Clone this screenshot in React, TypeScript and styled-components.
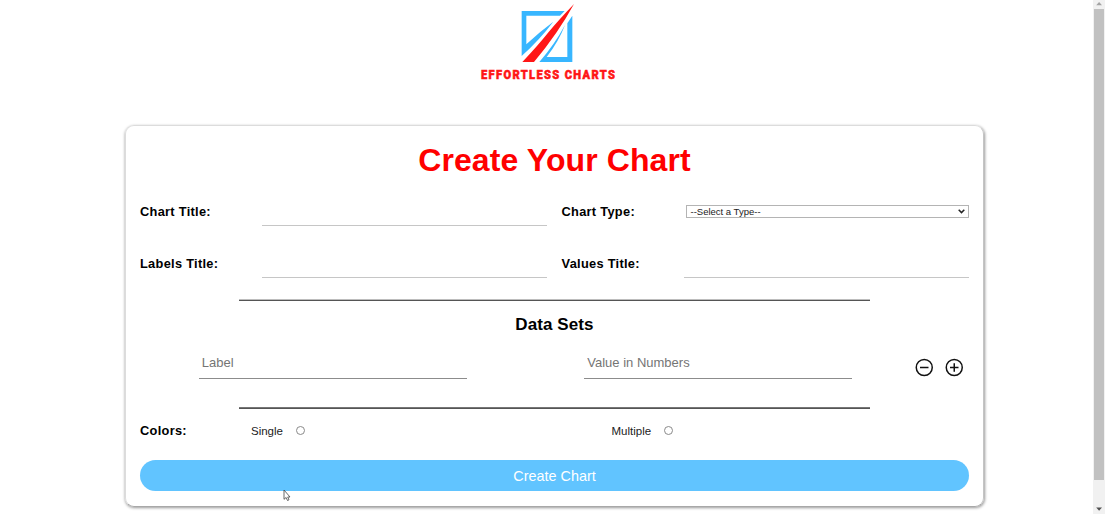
import React from "react";
import styled, { createGlobalStyle } from "styled-components";

const GlobalStyle = createGlobalStyle`
  *, *::before, *::after { box-sizing: border-box; }
  body {
    margin: 0;
    background: #fff;
    color: #000;
    font-family: "Liberation Sans", Arial, sans-serif;
    overflow: hidden;
  }
`;

const Page = styled.div`
  display: flex;
  height: 514px;
  overflow: hidden;
`;

const Main = styled.main`
  flex: 1;
  min-width: 0;
  padding-left: 125px;
`;

const Header = styled.header`
  width: 858px;
  height: 125px;
  display: flex;
  justify-content: center;
  padding-right: 8px;
  svg { overflow: visible; }
`;

const Card = styled.form`
  width: 859px;
  height: 382px;
  padding: 0 14px;
  border: 1px solid #dcdcdc;
  border-right-color: #c4c4c4;
  border-bottom-color: #a8a8a8;
  border-radius: 9px;
  box-shadow: 0.5px 1px 3px rgba(0, 0, 0, 0.4);
  display: flex;
  flex-direction: column;
`;

const Title = styled.h1`
  margin: 0;
  height: 67px;
  line-height: 68px;
  font-size: 32px;
  letter-spacing: 0.1px;
  color: #ff0000;
  text-align: center;
`;

const FieldGrid = styled.div`
  display: grid;
  grid-template-columns: 407px 407px;
  column-gap: 14.5px;
  grid-auto-rows: 52px;
  height: 106px;
  align-content: start;
`;

const Field = styled.div`
  display: grid;
  grid-template-columns: 122px 285px;
  height: 33px;
`;

const FieldLabel = styled.label`
  height: 33px;
  font-size: 12.8px;
  font-weight: 700;
  letter-spacing: 0.3px;
  line-height: 38px;
  white-space: nowrap;
`;

const LineInput = styled.input<{ $dark?: boolean }>`
  width: ${(p) => (p.$dark ? "268px" : "285px")};
  height: ${(p) => (p.$dark ? "32px" : "33px")};
  padding: 0 3.3px;
  border: 0;
  border-bottom: 1px solid ${(p) => (p.$dark ? "#8c8c8c" : "#c6c6c6")};
  background: transparent;
  outline: none;
  font: 13px "Liberation Sans", Arial, sans-serif;
  &::placeholder { color: #757575; opacity: 1; }
`;

const Select = styled.button`
  width: 283px;
  height: 13px;
  margin: 12px 0 0 2px;
  padding: 0 3px 0 4px;
  display: flex;
  align-items: center;
  justify-content: space-between;
  border: 1px solid #b4b4b4;
  background: #fff;
  color: #222;
  font: 9.5px/11px "Liberation Sans", Arial, sans-serif;
`;

const Divider = styled.div<{ $top: string; $bottom: string }>`
  width: 630.5px;
  height: 2px;
  margin-left: 99px;
  border-top: 1px solid ${(p) => p.$top};
  border-bottom: 1px solid ${(p) => p.$bottom};
  flex: none;
`;

const SectionTitle = styled.h2`
  margin: 0;
  height: 46px;
  line-height: 48px;
  font-size: 17px;
  letter-spacing: 0.1px;
  text-align: center;
`;

const DataRow = styled.div`
  display: flex;
  height: 60px;
  padding-left: 58.5px;
`;

const DataCell = styled.div`
  width: 385.5px;
`;

const Actions = styled.div`
  display: flex;
  gap: 11px;
  padding-top: 11px;
  margin-left: -54.5px;
`;

const IconButton = styled.button`
  width: 18.5px;
  height: 19px;
  padding: 0;
  border: 0;
  background: none;
  svg { display: block; }
`;

const ColorRow = styled.div`
  display: flex;
  height: 51px;
`;

const ColorLabel = styled(FieldLabel)`
  width: 111px;
  flex: none;
  line-height: 44px;
`;

const Choice = styled.label`
  display: flex;
  flex: none;
  width: 360.5px;
  font-size: 11.5px;
  line-height: 44px;
  color: #222;
`;

const Radio = styled.input`
  appearance: none;
  width: 9px;
  height: 9px;
  margin: 17px 0 0 13px;
  border: 1px solid #8a8a8a;
  border-radius: 50%;
`;

const Submit = styled.button`
  width: 829px;
  height: 31px;
  padding: 0;
  border: 0;
  border-radius: 16px;
  background: #61c4ff;
  color: #fff;
  font: 14.4px "Liberation Sans", Arial, sans-serif;
`;

const ScrollTrack = styled.div`
  width: 12px;
  background: #f1f1f1;
  display: flex;
  flex-direction: column;
  align-items: center;
  svg { display: block; flex: none; }
`;

const ScrollThumb = styled.div`
  width: 10px;
  height: 471px;
  background: #c1c1c1;
  flex: none;
`;

const Pointer = styled.svg`
  position: absolute;
  left: 283px;
  top: 489px;
`;

const Logo = () => (
  <svg width="160" height="90" viewBox="0 0 480 270" role="img" aria-label="Effortless Charts">
    <path fill="#38b6ff" d="M155 33H284L270 47H169V133Q210 94 250 65Q210 118 155 168Z" />
    <path fill="#38b6ff" d="M307 47V186H208Q254 133 285 75Q266 125 230 171H292V70Z" />
    <path fill="#ff1616" d="M312 12Q264 100 192 186H157Q206 134 236 96Q266 60 312 12Z" />
    <text
      x="33"
      y="236.5"
      fill="#ff1616"
      stroke="#ff1616"
      strokeWidth="1.6"
      fontFamily="Roboto, sans-serif"
      fontWeight="900"
      fontSize="37"
      textLength="406"
      lengthAdjust="spacingAndGlyphs"
      letterSpacing="4.5"
    >
      EFFORTLESS CHARTS
    </text>
  </svg>
);

const CircleIcon = ({ plus = false }: { plus?: boolean }) => (
  <svg width="18.5" height="19" viewBox="0 0 18.5 19" fill="none" stroke="#111" strokeWidth="1.5">
    <circle cx="9.25" cy="9.5" r="8" />
    <path d={plus ? "M5 9.5H13.5M9.25 5.2V13.8" : "M5 9.5H13.5"} />
  </svg>
);

const ScrollArrow = ({ down = false }: { down?: boolean }) => (
  <svg width="12" height={down ? 34 : 9} viewBox={down ? "0 0 12 34" : "0 0 12 9"}>
    <path fill={down ? "#505050" : "#a3a3a3"} d={down ? "M3.2 27.5H9L6.1 30.7Z" : "M3.2 5.3H9L6.1 2.1Z"} />
  </svg>
);

export default function App() {
  return (
    <Page>
      <GlobalStyle />
      <Main>
        <Header>
          <Logo />
        </Header>
        <Card onSubmit={(e) => e.preventDefault()}>
          <Title>Create Your Chart</Title>
          <FieldGrid>
            <Field>
              <FieldLabel>Chart Title:</FieldLabel>
              <LineInput />
            </Field>
            <Field>
              <FieldLabel>Chart Type:</FieldLabel>
              <Select type="button">
                <span>--Select a Type--</span>
                <svg width="7" height="5" viewBox="0 0 7 5" fill="none" stroke="#222" strokeWidth="1.5">
                  <path d="M.7 .8L3.5 3.6L6.3 .8" />
                </svg>
              </Select>
            </Field>
            <Field>
              <FieldLabel>Labels Title:</FieldLabel>
              <LineInput />
            </Field>
            <Field>
              <FieldLabel>Values Title:</FieldLabel>
              <LineInput />
            </Field>
          </FieldGrid>
          <Divider $top="#bdbdbd" $bottom="#555" />
          <SectionTitle>Data Sets</SectionTitle>
          <DataRow>
            <DataCell>
              <LineInput $dark placeholder="Label" />
            </DataCell>
            <DataCell>
              <LineInput $dark placeholder="Value in Numbers" />
            </DataCell>
            <Actions>
              <IconButton type="button" aria-label="Remove">
                <CircleIcon />
              </IconButton>
              <IconButton type="button" aria-label="Add">
                <CircleIcon plus />
              </IconButton>
            </Actions>
          </DataRow>
          <Divider $top="#777" $bottom="#555" />
          <ColorRow>
            <ColorLabel>Colors:</ColorLabel>
            <Choice>
              Single
              <Radio type="radio" name="colors" />
            </Choice>
            <Choice>
              Multiple
              <Radio type="radio" name="colors" />
            </Choice>
          </ColorRow>
          <Submit type="submit">Create Chart</Submit>
        </Card>
      </Main>
      <ScrollTrack>
        <ScrollArrow />
        <ScrollThumb />
        <ScrollArrow down />
      </ScrollTrack>
      <Pointer width="8" height="13" viewBox="0 0 8 13">
        <path d="M1 1V10.3L3.1 8.5L4.5 11.5L6 10.8L4.7 8H7Z" fill="#fff" stroke="#444" strokeWidth="0.8" />
      </Pointer>
    </Page>
  );
}
